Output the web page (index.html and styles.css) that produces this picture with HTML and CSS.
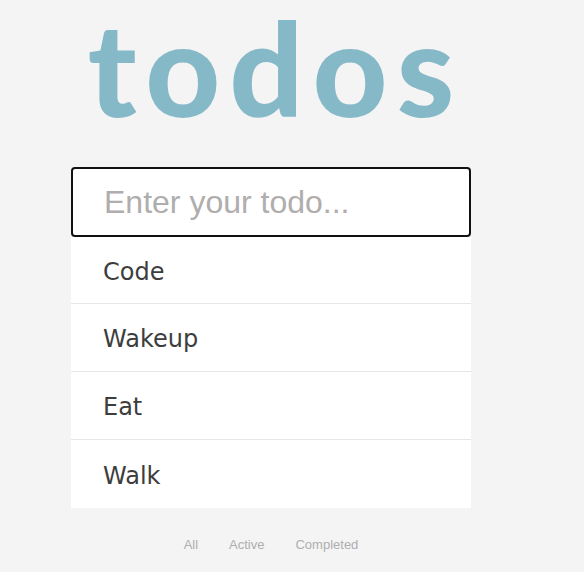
FILE: index.html
```html
<!DOCTYPE html>
<html lang="en">
<head>
<meta charset="utf-8">
<title>todos</title>
<link rel="stylesheet" href="styles.css">
</head>
<body>
<main class="app">
  <h1 class="title">todos</h1>
  <input class="new-todo" type="text" placeholder="Enter your todo..." autofocus>
  <ul class="todo-list">
    <li class="todo">Code</li>
    <li class="todo">Wakeup</li>
    <li class="todo">Eat</li>
    <li class="todo">Walk</li>
  </ul>
  <nav class="filters">
    <a class="filter">All</a>
    <a class="filter">Active</a>
    <a class="filter">Completed</a>
  </nav>
</main>
</body>
</html>
```
FILE: styles.css
```css
html, body {
  margin: 0;
  padding: 0;
  background: #f4f4f4;
}
.app {
  width: 400px;
  margin-left: 71px;
  display: flex;
  flex-direction: column;
}
.title {
  margin: 0 0 40px;
  padding-top: 7px;
  font-family: "Lato", sans-serif;
  font-weight: 900;
  font-size: 130px;
  line-height: 120px;
  letter-spacing: 9px;
  text-indent: 9px;
  color: #86b9c8;
  text-align: center;
}
.new-todo {
  box-sizing: border-box;
  height: 70px;
  width: 400px;
  margin: 0;
  padding: 0 0 0 31px;
  border: 2px solid #111;
  border-radius: 4px;
  background: #fff;
  font-family: "Liberation Sans", Arial, sans-serif;
  font-size: 32px;
  color: #333;
  outline: none;
  caret-color: #333;
}
.new-todo::placeholder {
  color: #b0adad;
}
.todo-list {
  list-style: none;
  margin: 0;
  padding: 0;
  background: #fff;
}
.todo {
  height: 67px;
  box-sizing: border-box;
  display: flex;
  align-items: center;
  padding: 3px 0 0 32px;
  font-family: "DejaVu Sans", sans-serif;
  font-size: 24px;
  color: #3d3d3d;
  border-bottom: 1px solid #e6e6e6;
}
.todo + .todo {
  height: 68px;
}
.todo:last-child {
  border-bottom: none;
}
.filters {
  margin-top: 29px;
  display: flex;
  justify-content: center;
  gap: 31px;
  font-family: "Liberation Sans", Arial, sans-serif;
  font-size: 13px;
  line-height: 15px;
  color: #aeaeae;
}
```
